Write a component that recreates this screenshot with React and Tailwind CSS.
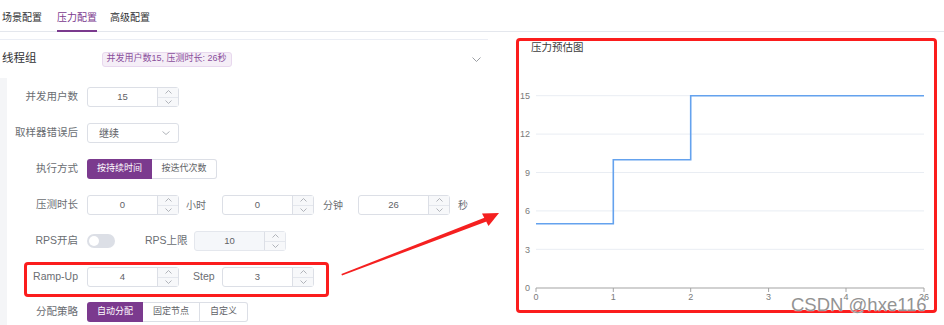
import React from "react";

const FONT = { fontFamily: '"Liberation Sans", "Noto Sans CJK SC", sans-serif' };

function Chevron({ dir = "up", color = "#a8abb2", w = 7, h = 4 }) {
  const pts = dir === "up" ? `0.5,${h - 0.5} ${w / 2},0.5 ${w - 0.5},${h - 0.5}` : `0.5,0.5 ${w / 2},${h - 0.5} ${w - 0.5},0.5`;
  return (
    <svg width={w} height={h} viewBox={`0 0 ${w} ${h}`}>
      <polyline points={pts} fill="none" stroke={color} strokeWidth="0.9" />
    </svg>
  );
}

function NumInput({ value, disabled }) {
  return (
    <div
      className={`w-[92px] h-[20px] rounded-[3px] border flex shrink-0 ${
        disabled ? "bg-[#f5f7fa] border-[#e4e7ed]" : "bg-white border-[#dcdfe6]"
      }`}
    >
      <div className="flex-1 flex items-center justify-center text-[9.5px] text-[#5f6266]">{value}</div>
      <div className="w-[21px] border-l border-[#dcdfe6] flex flex-col bg-[#f7f8fa]">
        <div className="flex-1 flex items-center justify-center border-b border-[#e4e7ed]">
          <Chevron dir="up" />
        </div>
        <div className="flex-1 flex items-center justify-center">
          <Chevron dir="down" />
        </div>
      </div>
    </div>
  );
}

function Row({ label, children, className = "" }) {
  return (
    <div className={`relative flex items-center h-[20px] ${className}`}>
      <div className="w-[71px] mr-[9px] text-right text-[10.5px] text-[#6a6d72] whitespace-nowrap">{label}</div>
      {children}
    </div>
  );
}

function Seg({ items }) {
  return (
    <div className="flex h-[20px]">
      {items.map((it, i) => (
        <div
          key={i}
          className={`flex items-center justify-center text-[9px] ${it.w} ${
            i === 0
              ? "bg-[#7b3a8e] text-white rounded-l-[3px]"
              : "bg-white text-[#606266] border border-[#dcdfe6] border-l-0"
          } ${i === items.length - 1 ? "rounded-r-[3px]" : ""}`}
        >
          {it.t}
        </div>
      ))}
    </div>
  );
}

function Chart() {
  const y = (v) => 287.7 - v * 12.8;
  const xs = [536, 613.3, 690.7, 768.6, 846, 924];
  const xl = ["0", "1", "2", "3", "4", "26"];
  return (
    <svg width="415" height="269" viewBox="519 41 415 269" className="block">
      <text x="531" y="51" fontSize="10.5" fill="#3d3d3d" style={FONT}>
        压力预估图
      </text>
      {[3, 6, 9, 12, 15].map((v) => (
        <line key={v} x1="536" x2="924" y1={y(v)} y2={y(v)} stroke="#e9edf3" strokeWidth="1" />
      ))}
      {[0, 3, 6, 9, 12, 15].map((v) => (
        <text key={v} x="530" y={y(v) + 3.3} fontSize="9" fill="#7a7a7a" textAnchor="end" style={FONT}>
          {v}
        </text>
      ))}
      <line x1="536" x2="924" y1="288" y2="288" stroke="#a3a3a3" strokeWidth="1" />
      {xs.map((x, i) => (
        <g key={i}>
          <line x1={x} x2={x} y1="288" y2="292" stroke="#a3a3a3" strokeWidth="1" />
          <text x={x} y="300" fontSize="9" fill="#7a7a7a" textAnchor="middle" style={FONT}>
            {xl[i]}
          </text>
        </g>
      ))}
      <path
        d={`M536 ${y(5)} H613.3 V${y(10)} H690.7 V${y(15)} H924`}
        fill="none"
        stroke="#64a2ee"
        strokeWidth="1.6"
      />
    </svg>
  );
}

export default function App() {
  return (
    <div className="relative w-[944px] h-[325px] bg-white overflow-hidden" style={FONT}>
      {/* Tabs */}
      <div className="flex h-[32px] border-b border-[#e4e7ed]">
        <div className="ml-[2px] h-full flex items-center pt-[3px] text-[10px] text-[#303133]">场景配置</div>
        <div className="relative ml-[15px] h-full flex items-center pt-[3px] text-[10px] text-[#7b3a8e]">
          压力配置
          <div className="absolute left-0 right-0 bottom-[-1px] h-[2px] bg-[#7b3a8e]" />
        </div>
        <div className="ml-[13px] h-full flex items-center pt-[3px] text-[10px] text-[#303133]">高级配置</div>
      </div>

      <div className="flex">
        {/* Left column */}
        <div className="w-[488px] mt-[7px] border-t border-[#ebeef5]">
          <div className="h-[38px] flex items-center">
            <div className="ml-[2px] text-[11.5px] text-[#303133]">线程组</div>
            <div className="ml-[65px] h-[15px] px-[4px] flex items-center rounded-[3px] bg-[#f5eef7] border border-[#e8d8ee] text-[9px] text-[#8a4f9c]">
              并发用户数15, 压测时长: 26秒
            </div>
            <div className="ml-auto mr-[7px] flex items-center">
              <Chevron dir="down" color="#909399" w={9} h={5} />
            </div>
          </div>

          <div className="flex h-[260px]">
            <div className="w-[7px] bg-[#f4f5f7]" />
            <div className="flex flex-col pt-[9px]">
              <Row label="并发用户数">
                <NumInput value="15" />
              </Row>

              <Row label="取样器错误后" className="mt-[16px]">
                <div className="w-[92px] h-[20px] rounded-[3px] border border-[#dcdfe6] flex items-center justify-between pl-[11px] pr-[8px]">
                  <span className="text-[10px] text-[#606266]">继续</span>
                  <Chevron dir="down" color="#a8abb2" w={8} h={4} />
                </div>
              </Row>

              <Row label="执行方式" className="mt-[16px]">
                <Seg items={[{ t: "按持续时间", w: "w-[65px]" }, { t: "按迭代次数", w: "w-[65px]" }]} />
              </Row>

              <Row label="压测时长" className="mt-[16px]">
                <NumInput value="0" />
                <span className="ml-[7px] w-[36px] text-[10px] text-[#6a6d72]">小时</span>
                <NumInput value="0" />
                <span className="ml-[9px] w-[35px] text-[10px] text-[#6a6d72]">分钟</span>
                <NumInput value="26" />
                <span className="ml-[8px] text-[10px] text-[#6a6d72]">秒</span>
              </Row>

              <Row label="RPS开启" className="mt-[16px]">
                <div className="w-[28px] h-[14px] rounded-full bg-[#dcdfe6] flex items-center pl-[2px]">
                  <div className="w-[10px] h-[10px] rounded-full bg-white" />
                </div>
                <span className="ml-[30px] w-[49px] text-[10.5px] text-[#6a6d72]">RPS上限</span>
                <NumInput value="10" disabled />
              </Row>

              <Row label="Ramp-Up" className="mt-[16px]">
                <NumInput value="4" />
                <span className="ml-[14px] w-[29px] text-[10.5px] text-[#6a6d72]">Step</span>
                <NumInput value="3" />
                <div className="absolute left-[17px] top-[-5px] w-[305px] h-[35px] border-[3px] border-[#fb1d1d] rounded-[4px] pointer-events-none" />
              </Row>

              <Row label="分配策略" className="mt-[15px]">
                <Seg
                  items={[
                    { t: "自动分配", w: "w-[56px]" },
                    { t: "固定节点", w: "w-[57px]" },
                    { t: "自定义", w: "w-[48px]" },
                  ]}
                />
              </Row>
            </div>
          </div>
        </div>

        {/* Right column: chart */}
        <div className="ml-[28px] mt-[6px]">
          <div className="w-[421px] h-[275px] border-[3px] border-[#fb1d1d] rounded-[4px] bg-white">
            <Chart />
          </div>
        </div>
      </div>

      {/* Annotation arrow */}
      <svg className="absolute left-0 top-0 pointer-events-none" width="944" height="325" viewBox="0 0 944 325">
        <polygon points="342,275.5 341.4,274 485,217.5 486.5,221.5" fill="#f52020" />
        <polygon points="499,213 482,213.5 488.5,226" fill="#f52020" />
      </svg>

      {/* Watermark */}
      <div
        className="absolute left-[791px] top-[296px] text-[18.5px] leading-[18px] text-[#939393] whitespace-nowrap"
        style={{ textShadow: "0 0 1px #fff, 0 0 1px #fff" }}
      >
        CSDN @hxe116
      </div>
    </div>
  );
}
